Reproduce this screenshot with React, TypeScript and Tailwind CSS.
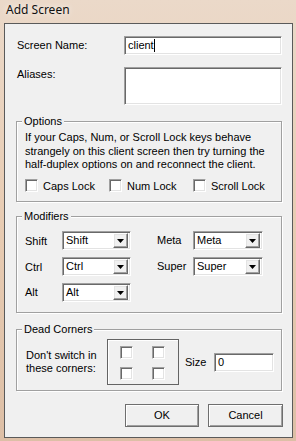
const sunken =
  "bg-white border border-t-[#a0a0a0] border-l-[#a0a0a0] border-r-white border-b-white shadow-[inset_1px_1px_0_#696969,inset_-1px_-1px_0_#e3e3e3]";
const raised =
  "bg-[#f0f0f0] border border-t-white border-l-white border-r-[#696969] border-b-[#696969] shadow-[inset_-1px_-1px_0_#a0a0a0,inset_1px_1px_0_#e3e3e3]";
const button =
  "h-[23px] bg-[#f0f0f0] border border-[#6e6e6e] shadow-[inset_1px_1px_0_#fff,inset_-1px_-1px_0_#a0a0a0]";

function CheckBox() {
  return <span className={`block w-[13px] h-[13px] shrink-0 ${sunken}`} />;
}

function Check({ label }: { label: string }) {
  return (
    <div className="w-[84px] flex items-center gap-[5px]">
      <CheckBox />
      <span>{label}</span>
    </div>
  );
}

function Combo({ value, w }: { value: string; w: string }) {
  return (
    <div className={`${w} h-[19px] flex items-center pl-[3px] pr-[2px] ${sunken}`}>
      <span className="flex-1 leading-[13px]">{value}</span>
      <span className={`w-[15px] h-[15px] flex items-center justify-center ${raised}`}>
        <svg width="7" height="4" viewBox="0 0 7 4">
          <path d="M0 0h7L3.5 4z" fill="#000" />
        </svg>
      </span>
    </div>
  );
}

function Group({ title, h, className = "", children }: { title: string; h: string; className?: string; children: React.ReactNode }) {
  return (
    <div className={`relative w-[266px] ${h} border border-[#a0a0a0] shadow-[inset_1px_1px_0_#fff,1px_1px_0_#fff] ${className}`}>
      <span className="absolute left-[5px] -top-[7px] px-[2px] bg-[#f0f0f0] leading-[13px]">{title}</span>
      {children}
    </div>
  );
}

export default function App() {
  return (
    <div className="w-[296px] h-[441px] flex flex-col bg-gradient-to-b from-[#ebd9c9] via-[#e8ccb3] to-[#ddbfa6] font-['Liberation_Sans',Arial,sans-serif] text-[11px] text-black">
      <div className="h-[23px] pl-[6px] pt-[1px] leading-[18px] text-[12px] font-['Noto_Sans',sans-serif] text-[#111] [text-shadow:0_0_6px_#fff]">
        Add Screen
      </div>

      <div className="ml-[4px] w-[289px] h-[415px] border border-[#5a5a5a] bg-[#f0f0f0] flex flex-col pl-[11px] pt-[12px]">
        <div className="flex h-[19px]">
          <span className="w-[108px] pl-[1px] pt-[3px] leading-[13px]">Screen Name:</span>
          <div className={`w-[158px] h-[19px] flex items-center pl-[3px] ${sunken}`}>
            <span className="leading-[13px]">client</span>
            <span className="w-[1px] h-[13px] bg-black" />
          </div>
        </div>

        <div className="flex mt-[12px]">
          <span className="w-[108px] pl-[1px] pt-[1px] leading-[13px]">Aliases:</span>
          <div className={`w-[158px] h-[38px] ${sunken}`} />
        </div>

        <Group title="Options" h="h-[81px]" className="mt-[16px] pl-[8px] pr-[4px] pt-[9px]">
          <p className="leading-[13.5px]">
            If your Caps, Num, or Scroll Lock keys behave strangely on this client screen then try turning the half-duplex options on and reconnect the client.
          </p>
          <div className="flex mt-[6px]">
            <Check label="Caps Lock" />
            <Check label="Num Lock" />
            <Check label="Scroll Lock" />
          </div>
        </Group>

        <Group title="Modifiers" h="h-[97px]" className="mt-[14px] pl-[8px] pt-[14px]">
          <div className="grid grid-cols-[37px_69px_26px_36px_70px] gap-y-[7px] items-center">
            <span className="pt-[2px]">Shift</span>
            <Combo value="Shift" w="w-[69px]" />
            <span />
            <span>Meta</span>
            <Combo value="Meta" w="w-[70px]" />
            <span className="pt-[1px]">Ctrl</span>
            <Combo value="Ctrl" w="w-[69px]" />
            <span />
            <span>Super</span>
            <Combo value="Super" w="w-[70px]" />
            <span>Alt</span>
            <Combo value="Alt" w="w-[69px]" />
          </div>
        </Group>

        <Group title="Dead Corners" h="h-[62px]" className="mt-[16px] pl-[9px] pt-[9px]">
          <div className="flex items-center">
            <div className="w-[81px] leading-[13px]">
              Don't switch in
              <br />
              these corners:
            </div>
            <div className="w-[72px] h-[46px] border border-[#646464] shadow-[inset_1px_1px_0_#fff] grid grid-cols-[13px_13px] gap-x-[19px] gap-y-[8px] pl-[12px] pt-[6px] content-start">
              <CheckBox />
              <CheckBox />
              <CheckBox />
              <CheckBox />
            </div>
            <span className="ml-[6px] w-[29px]">Size</span>
            <div className={`w-[60px] h-[19px] flex items-center pl-[3px] ${sunken}`}>
              <span className="leading-[13px]">0</span>
            </div>
          </div>
        </Group>

        <div className="w-[267px] mt-[13px] flex justify-end gap-[9px]">
          <button className={`w-[74px] ${button}`}>OK</button>
          <button className={`w-[75px] ${button}`}>Cancel</button>
        </div>
      </div>
    </div>
  );
}
